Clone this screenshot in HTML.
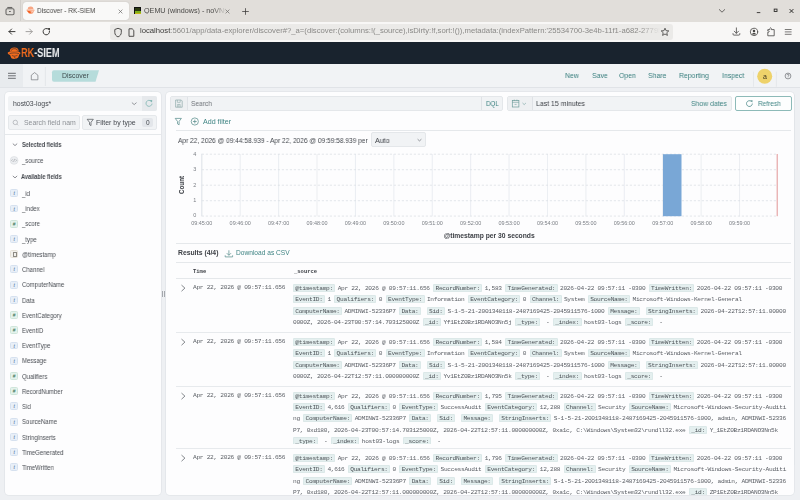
<!DOCTYPE html>
<html><head><meta charset="utf-8">
<style>
*{box-sizing:border-box;margin:0;padding:0}
html,body{width:800px;height:500px;overflow:hidden;background:#eef0f3;font-family:"Liberation Sans",sans-serif;color:#343741}
.a{position:absolute}
.t,.ml,.mh{will-change:transform}
#tabbar{left:0;top:0;width:800px;height:21.5px;background:#e1deda}
#addr{left:0;top:21.5px;width:800px;height:20px;background:#f8f7f6}
#hdr{left:0;top:41.5px;width:800px;height:22.5px;background:#19232e}
#crumb{left:0;top:64px;width:800px;height:24px;background:#f1f3f5;border-bottom:1.2px solid #e0e3e7}
#lcard{left:5px;top:92px;width:156px;height:403px;background:#fdfdfe;border-radius:4px;box-shadow:0 0 0 .8px #e2e5e9}
#rcard{left:166px;top:92px;width:628.3px;height:403px;background:#fdfdfe;border-radius:4px;box-shadow:0 0 0 .8px #e2e5e9;overflow:hidden}
.t{white-space:nowrap;font-size:7px;line-height:1}
.nav{top:8.3px;font-size:7.7px;transform:scaleX(.896);transform-origin:0 0;color:#367d7c}
.fi{left:5.3px;width:7.8px;height:7.9px;margin-top:-.4px;border-radius:1.5px;font-size:5px;line-height:7.4px;text-align:center;font-weight:bold}
.ft{background:#e8eff8;border:.5px solid #d6e1ef;color:#3c5f8e;font-style:italic;font-weight:normal}
.fn{background:#e4f2ec;border:.5px solid #cfe5da;color:#2f6f4f;font-weight:normal}
.fd{background:#f3f1ec;border:.5px solid #e6e1d7}
.fl{left:16.9px;font-size:6.9px;transform:scaleX(.87);transform-origin:0 0;color:#4a4e54}
.hb{font-size:6.4px;font-weight:bold;transform:scaleX(.88);transform-origin:0 0;color:#44484e}
svg text{font-family:"Liberation Sans",sans-serif}
.ml{font-family:"Liberation Mono",monospace;font-size:6.2px;letter-spacing:-.30px;line-height:9px;height:8px;white-space:pre;color:#5a5e64}
.ml i{font-style:normal;display:inline-block;vertical-align:top;height:8px;padding:0 2.35px;margin-right:2.4px;background:#e4efef;box-shadow:inset 0 0 0 .5px #d3e2e2;border-radius:1.6px;color:#4e5459}
.mh{font-family:"Liberation Mono",monospace;font-size:5.5px;line-height:8px;font-weight:bold;white-space:pre;color:#3d4046}
</style></head><body>

<div id="tabbar" class="a">
 <svg class="a" style="left:0;top:0" width="800" height="21">
  <g fill="none" stroke="#6a6866" stroke-width="1.1">
   <path d="M7.3 7.5H12.3"/><rect x="6" y="8.8" width="8" height="5.9" rx="1.2"/><path d="M9 11.5H10.8"/>
  </g>
  <path d="M20.5 0V21" stroke="#d2cfcb" stroke-width="1"/>
 </svg>
 <div class="a" style="left:22.5px;top:2.2px;width:106px;height:17.6px;background:#f9f9f8;border-radius:3px;box-shadow:0 0 1px rgba(0,0,0,.25)"></div>
 <svg class="a" style="left:25.9px;top:6.4px" width="9.6" height="8.8" viewBox="0 0 15 13">
  <path d="M2.8 4.4C2.8 1.6 5 .5 7.6 .6C10.2 .7 11.8 1.8 11.6 4.6" fill="#f7a583"/>
  <path d="M.8 5.6C2.5 4.2 9 3.8 13.2 5.4C13.8 6 13.4 7 12.4 7.3L11.2 10.6C9.6 12.2 6.2 12.4 4.4 11.2L3 8C1.4 7.6 .4 6.6 .8 5.6Z" fill="#f8a47f"/>
  <path d="M1.6 7.4C3 6.6 5 7 7 8.2L7.6 10.6C6 11.2 4 10.6 3 9Z" fill="#f45d1c"/>
  <path d="M2.6 6.2C5.4 5.2 9.4 5.4 12 6.2" stroke="#fff" stroke-width=".8" fill="none"/>
  <path d="M8.6 8.6L10.6 8.2" stroke="#fff" stroke-width=".9" fill="none"/>
 </svg>
 <div class="a t" style="left:37px;top:7px;font-size:7.7px;transform:scaleX(.85);transform-origin:0 0;color:#4a4947">Discover - RK-SIEM</div>
 <svg class="a" style="left:117px;top:8px" width="7" height="7"><path d="M1.6 1.6L5.4 5.4M5.4 1.6L1.6 5.4" stroke="#6b6a68" stroke-width=".7"/></svg>
 <div class="a" style="left:134px;top:7.3px;width:7px;height:7px;background:#2c3a12;border:0.6px solid #111"><div style="position:absolute;left:0;top:2.3px;width:6px;height:2px;background:#7fb01c"></div><div style="position:absolute;left:0;top:4.3px;width:6px;height:1px;background:#c9b417">
</div></div>
 <div class="a t" style="left:143.7px;top:7.4px;font-size:7.2px;color:#4a4947;width:82px;overflow:hidden;-webkit-mask-image:linear-gradient(90deg,#000 85%,transparent)">QEMU (windows) - noVNC</div>
 <svg class="a" style="left:223.5px;top:8px" width="7" height="7"><path d="M1.6 1.6L5.4 5.4M5.4 1.6L1.6 5.4" stroke="#6b6a68" stroke-width=".7"/></svg>
 <svg class="a" style="left:241px;top:7px" width="9" height="9"><path d="M4.5 1.2V7.8M1.2 4.5H7.8" stroke="#3b3a38" stroke-width=".75"/></svg>
 <svg class="a" style="left:716px;top:7px" width="12" height="8"><path d="M3 2.3L6 5.2L9 2.3" fill="none" stroke="#5a5856" stroke-width=".9"/></svg>
 <svg class="a" style="left:754px;top:7px" width="10" height="8"><path d="M2.8 5.6H6.3" stroke="#2e2d2b" stroke-width=".9"/></svg>
 <svg class="a" style="left:771px;top:7px" width="10" height="8"><rect x="3.2" y="2.1" width="2.8" height="2.4" fill="none" stroke="#2e2d2b" stroke-width=".9"/></svg>
 <svg class="a" style="left:787px;top:6px" width="10" height="10"><path d="M2.6 3.1L6.4 6.9M6.4 3.1L2.6 6.9" stroke="#2e2d2b" stroke-width="1"/></svg>
</div>
<div id="addr" class="a">
 <svg class="a" style="left:0;top:0" width="110" height="20">
  <g fill="none" stroke-width="1" stroke-linecap="round" stroke-linejoin="round">
   <path d="M9 9.6H15M11.6 7L9 9.6L11.6 12.2" stroke="#3a3937"/>
   <path d="M26 9.6H32.2M29.6 7L32.2 9.6L29.6 12.2" stroke="#a3a19f"/>
   <path d="M48.4 7.2A3.2 3.2 0 1 0 49.5 9.2" stroke="#3a3937"/>
  </g>
  <path d="M47.3 6.2L50 6L49.9 8.7Z" fill="#3a3937"/>
 </svg>
 <div class="a" style="left:110px;top:2px;width:562.5px;height:16.5px;background:#ebeae8;border-radius:3px"></div>
 <svg class="a" style="left:112px;top:3px" width="30" height="16">
  <path d="M6 3.3L9.3 4.5V7.5C9.3 9.6 7.8 11.2 6 11.9C4.2 11.2 2.8 9.6 2.8 7.5V4.5Z" fill="none" stroke="#3f3e3c" stroke-width=".9"/>
  <path d="M17 3.8H20.2L21.8 5.4V11.3H17Z" fill="none" stroke="#3f3e3c" stroke-width=".9"/>
 </svg>
 <div class="a t" style="left:140px;top:5.6px;font-size:7.7px;color:#8a8987;width:520px;overflow:hidden;-webkit-mask-image:linear-gradient(90deg,#000 96%,transparent)"><span style="color:#3a3937">localhost</span>:5601/app/data-explorer/discover#?_a=(discover:(columns:!(_source),isDirty:!f,sort:!()),metadata:(indexPattern:'25534700-3e4b-11f1-a682-2779b0c</div>
 <svg class="a" style="left:660px;top:5px" width="10" height="10"><path d="M5 1.2L6.1 3.7L8.8 3.9L6.8 5.7L7.4 8.4L5 7L2.6 8.4L3.2 5.7L1.2 3.9L3.9 3.7Z" fill="none" stroke="#3f3e3c" stroke-width=".8" stroke-linejoin="round"/></svg>
 <svg class="a" style="left:730px;top:3px" width="70" height="14">
  <g fill="none" stroke="#454442" stroke-width=".8" stroke-linecap="round" stroke-linejoin="round">
   <path d="M6.4 2.9V8.2M4.3 6.2L6.4 8.3L8.5 6.2M3 8.6V9.2Q3 10.1 3.9 10.1H8.9Q9.8 10.1 9.8 9.2V8.6"/>
   <circle cx="24" cy="6.9" r="3.7"/>
   <path d="M37.8 10.4V7.2Q38.8 7.6 39.2 6.6Q38.8 5.6 37.8 6V4.6H39.8Q39.4 3.4 40.6 2.8Q41.8 3.4 41.4 4.6H44.2V10.4Z"/>
   <path d="M55.2 4.5H61.2M55.2 6.9H61.2M55.2 9.3H61.2" stroke-width=".7"/>
  </g>
  <circle cx="24" cy="5.9" r="1.25" fill="#454442"/><path d="M21.9 9.4Q22.3 7.8 24 7.7Q25.7 7.8 26.1 9.4Z" fill="#454442"/>
 </svg>
</div>

<div id="hdr" class="a">
 <svg class="a" style="left:7px;top:5.5px" width="15" height="13" viewBox="0 0 15 13">
  <path d="M2.8 4.4C2.8 1.6 5 .5 7.6 .6C10.2 .7 11.8 1.8 11.6 4.6" fill="#f26b1d"/>
  <path d="M4.2 3.6C4.6 2.2 6.2 1.6 7.8 1.7C9.4 1.8 10.3 2.5 10.4 3.6" fill="none" stroke="#19232e" stroke-width=".6"/>
  <path d="M.8 5.6C2.5 4.2 9 3.8 13.2 5.4C13.8 6 13.4 7 12.4 7.3L11.2 10.6C9.6 12.2 6.2 12.4 4.4 11.2L3 8C1.4 7.6 .4 6.6 .8 5.6Z" fill="#f26b1d"/>
  <path d="M2.6 6.6C5.4 5.6 9.4 5.8 12 6.6" stroke="#19232e" stroke-width=".55" fill="none"/>
  <path d="M4.8 8.4C6.4 9.4 8.6 9.4 10.6 8.2M7.4 9.6L8.2 11.6" stroke="#19232e" stroke-width=".55" fill="none"/>
 </svg>
 <div class="a t" style="left:21.3px;top:5.4px;font-size:12.4px;font-weight:bold;transform:scaleX(.745);transform-origin:0 0;letter-spacing:-.1px;color:#fff"><span style="color:#f26b1d">RK</span><span style="color:#e8eaec">-SIEM</span></div>
</div>
<div id="crumb" class="a">
 <div class="a" style="left:0;top:0;width:23px;height:23px;background:#e8ebee"></div>
 <svg class="a" style="left:0;top:0" width="100" height="24">
  <path d="M8 9.3H15.8M8 11.8H15.8M8 14.3H15.8" stroke="#53565b" stroke-width=".85"/>
  <path d="M31.3 15.8V11.2L34.6 8.6L37.9 11.2V15.8Z" fill="none" stroke="#6a6d72" stroke-width=".65" stroke-linejoin="round"/>
  <path d="M45.4 3V22" stroke="#e0e3e7" stroke-width=".8"/>
  <path d="M54 6.3H99L95.5 17.7H54Q52 17.7 52 15.7V8.3Q52 6.3 54 6.3Z" fill="#b6dcdb"/>
 </svg>
 <div class="a t" style="left:61.6px;top:9px;font-size:6.9px;color:#3e4b4d">Discover</div>
 <div class="a t nav" style="left:565.4px">New</div>
 <div class="a t nav" style="left:591.5px">Save</div>
 <div class="a t nav" style="left:618.5px">Open</div>
 <div class="a t nav" style="left:648px">Share</div>
 <div class="a t nav" style="left:678.6px">Reporting</div>
 <div class="a t nav" style="left:722px">Inspect</div>
 <svg class="a" style="left:740px;top:0" width="60" height="24">
  <path d="M13.5 7.7V22.7M36.4 7.7V22.7" stroke="#dfe2e6" stroke-width=".7"/>
  <circle cx="24.7" cy="12.2" r="7.5" fill="#eed26a"/>
  <circle cx="48" cy="12" r="2.9" fill="none" stroke="#6b6e73" stroke-width=".7"/>
  <path d="M47 11.2Q47.2 10.2 48.1 10.2Q49 10.3 49 11.1Q49 11.8 48 12.3V12.8M48 13.6V13.9" fill="none" stroke="#5b5e63" stroke-width=".6"/>
 </svg>
 <div class="a t" style="left:762.6px;top:8.6px;font-size:7px;color:#3a3320">a</div>
</div>
<div id="lcard" class="a">
 <div class="a" style="left:3px;top:4.3px;width:149px;height:14.5px;background:#f1f3f5;border-radius:2px;overflow:hidden">
  <div class="a" style="left:134.2px;top:0;width:15px;height:14.5px;background:#e6e9ec"></div>
 </div>
 <div class="a t" style="left:7.8px;top:8.6px;font-size:6.9px;color:#44484e">host03-logs*</div>
 <svg class="a" style="left:0;top:0" width="156" height="40">
  <path d="M126.9 10.6L129.2 12.6L131.5 10.6" fill="none" stroke="#6b6f75" stroke-width=".7"/>
  <path d="M146.2 9.3A3 3 0 1 0 147 11.6" fill="none" stroke="#7fb5b2" stroke-width=".8"/>
  <path d="M144.6 8.3L147.2 8.1L147 10.6Z" fill="#7fb5b2"/>
 </svg>
 <div class="a" style="left:3px;top:23.2px;width:72px;height:14.8px;background:#f1f3f5;border:.6px solid #e5e8eb;border-radius:2px"></div>
 <svg class="a" style="left:0;top:0" width="156" height="40">
  <circle cx="10.3" cy="30.4" r="2.2" fill="none" stroke="#9a9ea3" stroke-width=".6"/>
  <path d="M11.9 32.1L13.1 33.3" stroke="#9a9ea3" stroke-width=".6"/>
 </svg>
 <div class="a t" style="left:19.4px;top:27.8px;font-size:6.9px;color:#8e9297;width:55px;overflow:hidden">Search field nam</div>
 <div class="a" style="left:77.3px;top:23.2px;width:74.7px;height:15.3px;background:#f1f3f5;border:.6px solid #e5e8eb;border-radius:2px"></div>
 <svg class="a" style="left:0;top:0" width="156" height="40">
  <path d="M82.2 27.3H88.3L86 30.3V33.6L84.5 32.6V30.3Z" fill="none" stroke="#4b4f55" stroke-width=".7" stroke-linejoin="round"/>
 </svg>
 <div class="a t" style="left:91px;top:27.8px;font-size:6.95px;color:#44484e">Filter by type</div>
 <div class="a" style="left:137.2px;top:26.1px;width:10.6px;height:8.8px;background:#e3e6ea;border-radius:2px"></div>
 <div class="a t" style="left:140.7px;top:28.2px;font-size:6.5px;color:#44484e">0</div>
 <div class="a" style="left:0;top:42.2px;width:156px;height:.8px;background:#e5e8eb"></div>
 <svg class="a" style="left:0;top:0" width="40" height="100">
  <path d="M7.8 51.6L10 53.6L12.2 51.6M7.8 83.9L10 85.9L12.2 83.9" fill="none" stroke="#5b5f65" stroke-width=".7"/>
  <circle cx="9.1" cy="68.4" r="3.9" fill="#eceef1" stroke="#d8dbdf" stroke-width=".6"/>
  <path d="M7.6 67.3L6.6 68.4L7.6 69.5M10.6 67.3L11.6 68.4L10.6 69.5M9.6 66.9L8.6 69.9" fill="none" stroke="#8b8f95" stroke-width=".5"/>
 </svg>
 <div class="a t hb" style="left:16.6px;top:49.74px">Selected fields</div>
 <div class="a t fl" style="left:16.9px;top:65.96px">_source</div>
 <div class="a t hb" style="left:16.4px;top:82.05px">Available fields</div>
<div class="a fi ft" style="top:97.70px">t</div><div class="a t fl" style="top:99.04px">_id</div>
<div class="a fi ft" style="top:112.92px">t</div><div class="a t fl" style="top:114.26px">_index</div>
<div class="a fi fn" style="top:128.14px">#</div><div class="a t fl" style="top:129.48px">_score</div>
<div class="a fi ft" style="top:143.36px">t</div><div class="a t fl" style="top:144.70px">_type</div>
<div class="a fi fd" style="top:158.58px"><div style="position:absolute;left:1.4px;top:.9px;width:4.6px;height:5.2px;border:.55px solid #8e8b85;border-top-width:.9px"></div></div><div class="a t fl" style="top:159.92px">@timestamp</div>
<div class="a fi ft" style="top:173.80px">t</div><div class="a t fl" style="top:175.14px">Channel</div>
<div class="a fi ft" style="top:189.02px">t</div><div class="a t fl" style="top:190.36px">ComputerName</div>
<div class="a fi ft" style="top:204.24px">t</div><div class="a t fl" style="top:205.58px">Data</div>
<div class="a fi fn" style="top:219.46px">#</div><div class="a t fl" style="top:220.80px">EventCategory</div>
<div class="a fi fn" style="top:234.68px">#</div><div class="a t fl" style="top:236.02px">EventID</div>
<div class="a fi ft" style="top:249.90px">t</div><div class="a t fl" style="top:251.24px">EventType</div>
<div class="a fi ft" style="top:265.12px">t</div><div class="a t fl" style="top:266.46px">Message</div>
<div class="a fi fn" style="top:280.34px">#</div><div class="a t fl" style="top:281.68px">Qualifiers</div>
<div class="a fi fn" style="top:295.56px">#</div><div class="a t fl" style="top:296.90px">RecordNumber</div>
<div class="a fi ft" style="top:310.78px">t</div><div class="a t fl" style="top:312.12px">Sid</div>
<div class="a fi ft" style="top:326.00px">t</div><div class="a t fl" style="top:327.34px">SourceName</div>
<div class="a fi ft" style="top:341.22px">t</div><div class="a t fl" style="top:342.56px">StringInserts</div>
<div class="a fi ft" style="top:356.44px">t</div><div class="a t fl" style="top:357.78px">TimeGenerated</div>
<div class="a fi ft" style="top:371.66px">t</div><div class="a t fl" style="top:373.00px">TimeWritten</div>
</div>
<div class="a" style="left:161.9px;top:291px;width:.8px;height:5.5px;background:#a4a7ac"></div><div class="a" style="left:164.1px;top:291px;width:.8px;height:5.5px;background:#a4a7ac"></div>
<div class="a" style="left:793.6px;top:95px;width:1.6px;height:369.6px;background:#e3e6ea"></div>
<div id="rcard" class="a"><div class="a" id="rin" style="left:-166px;top:-92px;width:800px;height:500px">
 <div class="a" style="left:170px;top:96.2px;width:333px;height:14.8px;background:#f1f3f5;border:.6px solid #e4e7ea;border-radius:2px;overflow:hidden">
  <div class="a" style="left:0;top:0;width:17.2px;height:14px;background:#eef0f2;border-right:.6px solid #e0e3e7"></div>
  <div class="a" style="left:309.8px;top:0;width:.6px;height:14px;background:#dfe2e6"></div>
 </div>
 <svg class="a" style="left:170px;top:96px" width="20" height="15">
  <path d="M5.6 4H11.2L12.2 5V11.2H5.6Z" fill="none" stroke="#7d9e9d" stroke-width=".6"/>
  <path d="M7.4 4V6.4H10.2V4M7.4 11.2V8.4H10.2V11.2M8.8 8.4V11.2" fill="none" stroke="#7d9e9d" stroke-width=".5"/>
 </svg>
 <div class="a t" style="left:191px;top:100.00px;font-size:7.00px;transform:scaleX(0.943);transform-origin:0 0;color:#6f7379">Search</div>
 <div class="a t" style="left:486px;top:100.3px;font-size:7px;transform:scaleX(.89);transform-origin:0 0;color:#3f8483">DQL</div>
 <div class="a" style="left:507px;top:96.2px;width:224.7px;height:14.8px;background:#f1f3f5;border:.6px solid #e4e7ea;border-radius:2px;overflow:hidden">
  <div class="a" style="left:0;top:0;width:24.7px;height:14px;background:#eef0f2;border-right:.6px solid #dfe2e6"></div>
 </div>
 <svg class="a" style="left:507px;top:96px" width="26" height="15">
  <rect x="5.3" y="4.6" width="6.6" height="6.4" fill="none" stroke="#6d9c9b" stroke-width=".7"/>
  <path d="M5.3 6.3H11.9M7.3 3.6V5M9.9 3.6V5M7.6 8.4H9.6" stroke="#6d9c9b" stroke-width=".6"/>
  <path d="M15.5 7L17.2 8.6L18.9 7" fill="none" stroke="#6d9c9b" stroke-width=".6"/>
 </svg>
 <div class="a t" style="left:535.9px;top:99.70px;font-size:7.63px;transform:scaleX(0.909);transform-origin:0 0;color:#3d4046">Last 15 minutes</div>
 <div class="a t" style="left:691.2px;top:99.70px;font-size:7.58px;transform:scaleX(0.909);transform-origin:0 0;color:#3f8483">Show dates</div>
 <div class="a" style="left:735.2px;top:96.2px;width:56.5px;height:15.3px;background:#fdfefe;border:.75px solid #8dbab8;border-radius:2px"></div>
 <svg class="a" style="left:744px;top:98px" width="12" height="12">
  <path d="M7.3 3.4A2.9 2.9 0 1 0 8.3 5.5" fill="none" stroke="#4f8c8b" stroke-width=".8"/>
  <path d="M6.4 2.6L8.5 2.3L8.3 4.5Z" fill="#4f8c8b"/>
 </svg>
 <div class="a t" style="left:757.7px;top:99.70px;font-size:7.02px;transform:scaleX(0.926);transform-origin:0 0;color:#3f8483">Refresh</div>
 <svg class="a" style="left:170px;top:114px" width="40" height="16">
  <path d="M5.2 4.4H11.4L9.1 7.4V10.8L7.5 9.8V7.4Z" fill="none" stroke="#5b8f8e" stroke-width=".75" stroke-linejoin="round"/>
  <circle cx="24.8" cy="7.5" r="3.6" fill="none" stroke="#5b8f8e" stroke-width=".75"/>
  <path d="M24.8 5.6V9.4M22.9 7.5H26.7" stroke="#5b8f8e" stroke-width=".75"/>
 </svg>
 <div class="a t" style="left:203px;top:118.9px;font-size:7.1px;color:#3f8483">Add filter</div>
 <div class="a" style="left:176px;top:130px;width:615px;height:.8px;background:#e5e8eb"></div>
 <div class="a t" style="left:177.5px;top:137.10px;font-size:7.57px;transform:scaleX(0.870);transform-origin:0 0;color:#44484e">Apr 22, 2026 @ 09:44:58.939 - Apr 22, 2026 @ 09:59:58.939 per</div>
 <div class="a" style="left:371.3px;top:132.4px;width:54.6px;height:14.9px;background:#f1f3f5;border:.6px solid #e4e7ea;border-radius:2px"></div>
 <div class="a t" style="left:375.4px;top:136.90px;font-size:7.46px;transform:scaleX(0.952);transform-origin:0 0;color:#3d4046">Auto</div>
 <svg class="a" style="left:415px;top:136px" width="10" height="8"><path d="M2.6 3.2L4.5 4.9L6.4 3.2" fill="none" stroke="#6b6f75" stroke-width=".7"/></svg>
 <svg class="a" style="left:0;top:0" width="800" height="250">
 <path d="M201.80 154V216.3" stroke="#e2e6ed" stroke-width=".7"/>
 <path d="M240.21 154V216.3" stroke="#e2e6ed" stroke-width=".7"/>
 <path d="M278.62 154V216.3" stroke="#e2e6ed" stroke-width=".7"/>
 <path d="M317.03 154V216.3" stroke="#e2e6ed" stroke-width=".7"/>
 <path d="M355.44 154V216.3" stroke="#e2e6ed" stroke-width=".7"/>
 <path d="M393.85 154V216.3" stroke="#e2e6ed" stroke-width=".7"/>
 <path d="M432.26 154V216.3" stroke="#e2e6ed" stroke-width=".7"/>
 <path d="M470.67 154V216.3" stroke="#e2e6ed" stroke-width=".7"/>
 <path d="M509.08 154V216.3" stroke="#e2e6ed" stroke-width=".7"/>
 <path d="M547.49 154V216.3" stroke="#e2e6ed" stroke-width=".7"/>
 <path d="M585.90 154V216.3" stroke="#e2e6ed" stroke-width=".7"/>
 <path d="M624.31 154V216.3" stroke="#e2e6ed" stroke-width=".7"/>
 <path d="M662.72 154V216.3" stroke="#e2e6ed" stroke-width=".7"/>
 <path d="M701.13 154V216.3" stroke="#e2e6ed" stroke-width=".7"/>
 <path d="M739.54 154V216.3" stroke="#e2e6ed" stroke-width=".7"/>
 <path d="M201.80 154.2H777" stroke="#d9dde3" stroke-width=".7" stroke-dasharray="2.2 1.8"/>
 <path d="M201.80 169.7H777" stroke="#d9dde3" stroke-width=".7" stroke-dasharray="2.2 1.8"/>
 <path d="M201.80 185.2H777" stroke="#d9dde3" stroke-width=".7" stroke-dasharray="2.2 1.8"/>
 <path d="M201.80 200.7H777" stroke="#d9dde3" stroke-width=".7" stroke-dasharray="2.2 1.8"/>
 <path d="M201.80 216.1H777" stroke="#d9dde3" stroke-width=".7" stroke-dasharray="2.2 1.8"/>
 <path d="M201.80 153.6V216.4" stroke="#dde1e8" stroke-width=".7"/>
 <rect x="663" y="154.2" width="18.5" height="62" fill="#79a7d6"/>
 <path d="M777.2 154V216.2" stroke="#e08a8a" stroke-width=".9"/>
 <text x="194.9" y="155.60" font-size="5.5" text-anchor="middle" fill="#7a7e84">4</text>
 <text x="194.9" y="171.00" font-size="5.5" text-anchor="middle" fill="#7a7e84">3</text>
 <text x="194.9" y="186.50" font-size="5.5" text-anchor="middle" fill="#7a7e84">2</text>
 <text x="194.9" y="202.00" font-size="5.5" text-anchor="middle" fill="#7a7e84">1</text>
 <text x="194.9" y="217.40" font-size="5.5" text-anchor="middle" fill="#7a7e84">0</text>
 <text x="201.80" y="224.8" font-size="5.45" text-anchor="middle" fill="#7a7e84">09:45:00</text>
 <text x="240.21" y="224.8" font-size="5.45" text-anchor="middle" fill="#7a7e84">09:46:00</text>
 <text x="278.62" y="224.8" font-size="5.45" text-anchor="middle" fill="#7a7e84">09:47:00</text>
 <text x="317.03" y="224.8" font-size="5.45" text-anchor="middle" fill="#7a7e84">09:48:00</text>
 <text x="355.44" y="224.8" font-size="5.45" text-anchor="middle" fill="#7a7e84">09:49:00</text>
 <text x="393.85" y="224.8" font-size="5.45" text-anchor="middle" fill="#7a7e84">09:50:00</text>
 <text x="432.26" y="224.8" font-size="5.45" text-anchor="middle" fill="#7a7e84">09:51:00</text>
 <text x="470.67" y="224.8" font-size="5.45" text-anchor="middle" fill="#7a7e84">09:52:00</text>
 <text x="509.08" y="224.8" font-size="5.45" text-anchor="middle" fill="#7a7e84">09:53:00</text>
 <text x="547.49" y="224.8" font-size="5.45" text-anchor="middle" fill="#7a7e84">09:54:00</text>
 <text x="585.90" y="224.8" font-size="5.45" text-anchor="middle" fill="#7a7e84">09:55:00</text>
 <text x="624.31" y="224.8" font-size="5.45" text-anchor="middle" fill="#7a7e84">09:56:00</text>
 <text x="662.72" y="224.8" font-size="5.45" text-anchor="middle" fill="#7a7e84">09:57:00</text>
 <text x="701.13" y="224.8" font-size="5.45" text-anchor="middle" fill="#7a7e84">09:58:00</text>
 <text x="739.54" y="224.8" font-size="5.45" text-anchor="middle" fill="#7a7e84">09:59:00</text>
 <text transform="translate(183.6 185) rotate(-90)" font-size="6.3" font-weight="bold" text-anchor="middle" fill="#3d4046">Count</text>
 <text x="489.2" y="237.8" font-size="6.72" font-weight="bold" text-anchor="middle" fill="#3d4046">@timestamp per 30 seconds</text>
 </svg>
 <!--TABLE-->
 <div class="a" style="left:175.5px;top:243px;width:615.5px;height:.8px;background:#e5e8eb"></div>
 <div class="a t" style="left:177.8px;top:250.2px;font-size:6.8px;font-weight:bold;color:#3d4046">Results (4/4)</div>
 <svg class="a" style="left:223px;top:248px" width="12" height="11">
  <path d="M5.9 2.3V7.2M3.8 5.2L5.9 7.3L8 5.2M2.2 7.3V8.9H9.6V7.3" fill="none" stroke="#5b8f8e" stroke-width=".75"/>
 </svg>
 <div class="a t" style="left:236.4px;top:250.2px;font-size:6.62px;color:#3f8483">Download as CSV</div>
 <div class="a" style="left:175.5px;top:262.3px;width:615.5px;height:.8px;background:#e5e8eb"></div>
 <div class="a mh" style="left:193px;top:268px">Time</div>
 <div class="a mh" style="left:294px;top:268px">_source</div>
 <div class="a" style="left:175.5px;top:278px;width:615.5px;height:.8px;background:#e5e8eb"></div>
 <svg class="a" style="left:179px;top:283.90px" width="8" height="8"><path d="M2.5 1.1L5.9 4.1L2.5 7.2" fill="none" stroke="#5b5f65" stroke-width=".75"/></svg>
 <div class="a ml" style="left:193px;top:282.90px">Apr 22, 2026 @ 09:57:11.656</div>
 <div class="a" style="left:293.4px;top:278.40px;width:500px;height:50.00px;overflow:hidden"><div class="a ml" style="left:0;top:5.50px"><i>@timestamp:</i>Apr 22, 2026 @ 09:57:11.656 <i>RecordNumber:</i>1,583 <i>TimeGenerated:</i>2026-04-22 09:57:11 -0300 <i>TimeWritten:</i>2026-04-22 09:57:11 -0300 </div><div class="a ml" style="left:0;top:16.90px"><i>EventID:</i>1 <i>Qualifiers:</i>0 <i>EventType:</i>Information <i>EventCategory:</i>0 <i>Channel:</i>System <i>SourceName:</i>Microsoft-Windows-Kernel-General </div><div class="a ml" style="left:0;top:28.30px"><i>ComputerName:</i>ADMINWI-52336P7 <i>Data:</i> <i>Sid:</i>S-1-5-21-2001348118-2487169425-2045911576-1000 <i>Message:</i> <i>StringInserts:</i>2026-04-22T12:57:11.00000 </div><div class="a ml" style="left:0;top:39.70px">0000Z, 2026-04-23T00:57:14.703125000Z <i>_id:</i>Yf1EtZ0Bz1RDANO3Nn5j <i>_type:</i> - <i>_index:</i>host03-logs <i>_score:</i> - </div></div>
 <div class="a" style="left:176px;top:332.20px;width:615px;height:.8px;background:#e7eaed"></div>
 <svg class="a" style="left:179px;top:337.90px" width="8" height="8"><path d="M2.5 1.1L5.9 4.1L2.5 7.2" fill="none" stroke="#5b5f65" stroke-width=".75"/></svg>
 <div class="a ml" style="left:193px;top:336.90px">Apr 22, 2026 @ 09:57:11.656</div>
 <div class="a" style="left:293.4px;top:332.60px;width:500px;height:49.80px;overflow:hidden"><div class="a ml" style="left:0;top:5.30px"><i>@timestamp:</i>Apr 22, 2026 @ 09:57:11.656 <i>RecordNumber:</i>1,584 <i>TimeGenerated:</i>2026-04-22 09:57:11 -0300 <i>TimeWritten:</i>2026-04-22 09:57:11 -0300 </div><div class="a ml" style="left:0;top:16.70px"><i>EventID:</i>1 <i>Qualifiers:</i>0 <i>EventType:</i>Information <i>EventCategory:</i>0 <i>Channel:</i>System <i>SourceName:</i>Microsoft-Windows-Kernel-General </div><div class="a ml" style="left:0;top:28.10px"><i>ComputerName:</i>ADMINWI-52336P7 <i>Data:</i> <i>Sid:</i>S-1-5-21-2001348118-2487169425-2045911576-1000 <i>Message:</i> <i>StringInserts:</i>2026-04-22T12:57:11.00000 </div><div class="a ml" style="left:0;top:39.50px">0000Z, 2026-04-22T12:57:11.000000000Z <i>_id:</i>Yv1EtZ0Bz1RDANO3Nn5k <i>_type:</i> - <i>_index:</i>host03-logs <i>_score:</i> - </div></div>
 <div class="a" style="left:176px;top:386.10px;width:615px;height:.8px;background:#e7eaed"></div>
 <svg class="a" style="left:179px;top:391.50px" width="8" height="8"><path d="M2.5 1.1L5.9 4.1L2.5 7.2" fill="none" stroke="#5b5f65" stroke-width=".75"/></svg>
 <div class="a ml" style="left:193px;top:390.50px">Apr 22, 2026 @ 09:57:11.656</div>
 <div class="a" style="left:293.4px;top:386.50px;width:500px;height:57.30px;overflow:hidden"><div class="a ml" style="left:0;top:5.00px"><i>@timestamp:</i>Apr 22, 2026 @ 09:57:11.656 <i>RecordNumber:</i>1,795 <i>TimeGenerated:</i>2026-04-22 09:57:11 -0300 <i>TimeWritten:</i>2026-04-22 09:57:11 -0300 </div><div class="a ml" style="left:0;top:16.40px"><i>EventID:</i>4,616 <i>Qualifiers:</i>0 <i>EventType:</i>SuccessAudit <i>EventCategory:</i>12,288 <i>Channel:</i>Security <i>SourceName:</i>Microsoft-Windows-Security-Auditi </div><div class="a ml" style="left:0;top:27.80px">ng <i>ComputerName:</i>ADMINWI-52336P7 <i>Data:</i> <i>Sid:</i> <i>Message:</i> <i>StringInserts:</i>S-1-5-21-2001348118-2487169425-2045911576-1000, admin, ADMINWI-52336 </div><div class="a ml" style="left:0;top:39.20px">P7, 0xd180, 2026-04-23T00:57:14.703125000Z, 2026-04-22T12:57:11.000000000Z, 0xa1c, C:\Windows\System32\rundll32.exe <i>_id:</i>Y_1EtZ0Bz1RDANO3Nn5k </div><div class="a ml" style="left:0;top:50.60px"><i>_type:</i> - <i>_index:</i>host03-logs <i>_score:</i> - </div></div>
 <div class="a" style="left:176px;top:447.70px;width:615px;height:.8px;background:#e7eaed"></div>
 <svg class="a" style="left:179px;top:453.80px" width="8" height="8"><path d="M2.5 1.1L5.9 4.1L2.5 7.2" fill="none" stroke="#5b5f65" stroke-width=".75"/></svg>
 <div class="a ml" style="left:193px;top:452.80px">Apr 22, 2026 @ 09:57:11.656</div>
 <div class="a" style="left:293.4px;top:448.10px;width:500px;height:55.80px;overflow:hidden"><div class="a ml" style="left:0;top:5.70px"><i>@timestamp:</i>Apr 22, 2026 @ 09:57:11.656 <i>RecordNumber:</i>1,796 <i>TimeGenerated:</i>2026-04-22 09:57:11 -0300 <i>TimeWritten:</i>2026-04-22 09:57:11 -0300 </div><div class="a ml" style="left:0;top:17.10px"><i>EventID:</i>4,616 <i>Qualifiers:</i>0 <i>EventType:</i>SuccessAudit <i>EventCategory:</i>12,288 <i>Channel:</i>Security <i>SourceName:</i>Microsoft-Windows-Security-Auditi </div><div class="a ml" style="left:0;top:28.50px">ng <i>ComputerName:</i>ADMINWI-52336P7 <i>Data:</i> <i>Sid:</i> <i>Message:</i> <i>StringInserts:</i>S-1-5-21-2001348118-2487169425-2045911576-1000, admin, ADMINWI-52336 </div><div class="a ml" style="left:0;top:39.90px">P7, 0xd180, 2026-04-22T12:57:11.000000000Z, 2026-04-22T12:57:11.000000000Z, 0xa1c, C:\Windows\System32\rundll32.exe <i>_id:</i>ZP1EtZ0Bz1RDANO3Nn5k </div><div class="a ml" style="left:0;top:51.30px"><i>_type:</i> - <i>_index:</i>host03-logs <i>_score:</i> - </div></div>
<!--/TABLE-->

</div></div>
</body></html>
